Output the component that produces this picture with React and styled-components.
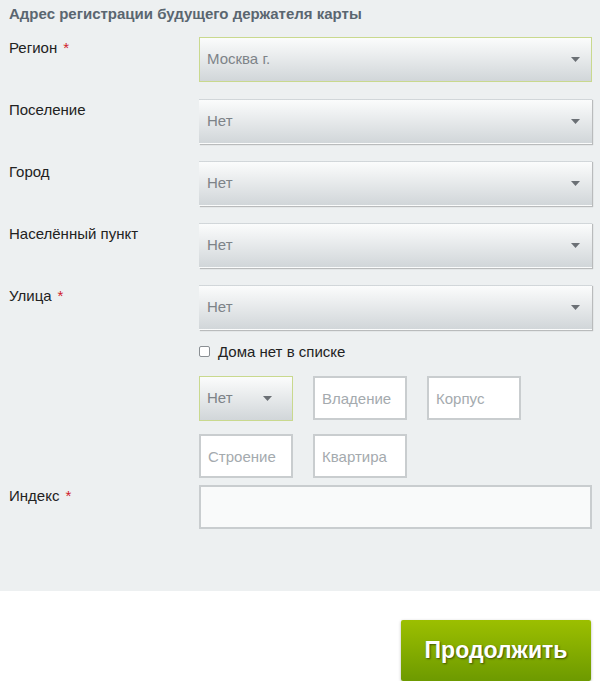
import React from "react";
import styled, { createGlobalStyle } from "styled-components";

const GlobalStyle = createGlobalStyle`
  html, body {
    margin: 0;
    padding: 0;
    background: #ffffff;
    font-family: "Liberation Sans", Arial, sans-serif;
  }
`;

const rows = [
  { label: "Регион", required: true, value: "Москва г.", active: true },
  { label: "Поселение", value: "Нет" },
  { label: "Город", value: "Нет" },
  { label: "Населённый пункт", value: "Нет" },
  { label: "Улица", required: true, value: "Нет" },
];

const Arrow = () => (
  <svg width="9" height="5" viewBox="0 0 9 5">
    <path d="M0 0 H9 L4.5 5 Z" fill="#6b7075" />
  </svg>
);

const App = () => (
  <>
    <GlobalStyle />
    <Panel>
      <Title>Адрес регистрации будущего держателя карты</Title>
      <Form>
        {rows.map((r) => (
          <React.Fragment key={r.label}>
            <Label>
              {r.label}
              {r.required && <Star>*</Star>}
            </Label>
            <Select $active={r.active}>
              <span>{r.value}</span>
              <Arrow />
            </Select>
          </React.Fragment>
        ))}
        <span />
        <CheckRow>
          <Box />
          Дома нет в списке
        </CheckRow>
        <span />
        <Cells>
          <Select $active $small>
            <span>Нет</span>
            <Arrow />
          </Select>
          <Cell>Владение</Cell>
          <Cell>Корпус</Cell>
          <Cell>Строение</Cell>
          <Cell>Квартира</Cell>
        </Cells>
        <Label $pull>
          Индекс<Star>*</Star>
        </Label>
        <Input />
      </Form>
    </Panel>
    <Footer>
      <Button>Продолжить</Button>
    </Footer>
  </>
);

export default App;

const Panel = styled.div`
  background: #edf0f1;
  padding: 4px 8px 62px 9px;
`;

const Title = styled.div`
  font-size: 15px;
  line-height: 19px;
  font-weight: bold;
  color: #5a6670;
  margin-bottom: 14px;
`;

const Form = styled.div`
  display: grid;
  grid-template-columns: 190px 393px;
  row-gap: 17px;
`;

const Label = styled.div`
  font-size: 15px;
  line-height: 18px;
  padding-top: 2px;
  color: #222;
  margin-top: ${(p) => (p.$pull ? "-10px" : "0")};
`;

const Star = styled.span`
  color: #d0202a;
  margin-left: 6px;
`;

const Select = styled.div`
  height: 45px;
  box-sizing: border-box;
  width: ${(p) => (p.$small ? "94px" : "auto")};
  display: flex;
  align-items: center;
  justify-content: space-between;
  padding: 0 ${(p) => (p.$small ? "20px" : "11px")} 3px 7px;
  font-size: 15px;
  color: #7d8388;
  background: linear-gradient(#fbfcfc, #d1d6d9);
  border: 1px solid ${(p) => (p.$active ? "#c9d98e" : "transparent")};
  box-shadow: ${(p) =>
    p.$active ? "none" : "1px 1px 1px rgba(0, 0, 0, 0.22)"};

  svg {
    margin-top: 3px;
  }
`;

const CheckRow = styled.label`
  display: flex;
  align-items: center;
  gap: 8px;
  font-size: 15px;
  color: #222;
  height: 20px;
  margin: -6px 0 -2px;
`;

const Box = styled.span`
  width: 9px;
  height: 9px;
  border: 1px solid #8a8f93;
  border-radius: 2px;
  background: #fff;
`;

const Cells = styled.div`
  display: grid;
  grid-template-columns: repeat(3, 94px);
  column-gap: 20px;
  row-gap: 13px;
`;

const Cell = styled.div`
  height: 44px;
  box-sizing: border-box;
  border: 2px solid #c9cdcf;
  background: #fff;
  display: flex;
  align-items: center;
  padding-left: 7px;
  font-size: 15px;
  color: #a4aaae;
`;

const Input = styled.div`
  height: 44px;
  box-sizing: border-box;
  border: 2px solid #c9cdcf;
  background: #f9fafa;
  margin-top: -10px;
`;

const Footer = styled.div`
  display: flex;
  justify-content: flex-end;
  padding: 29px 9px 0;
`;

const Button = styled.button`
  width: 190px;
  height: 61px;
  border: none;
  border-radius: 2px;
  background: linear-gradient(#9cbf00, #6d9a00);
  box-shadow: 0 1px 3px rgba(0, 0, 0, 0.3);
  color: #fff;
  font-family: "Liberation Sans", Arial, sans-serif;
  font-weight: bold;
  font-size: 23px;
  text-shadow: 1px 1px 2px rgba(0, 0, 0, 0.5);
`;
